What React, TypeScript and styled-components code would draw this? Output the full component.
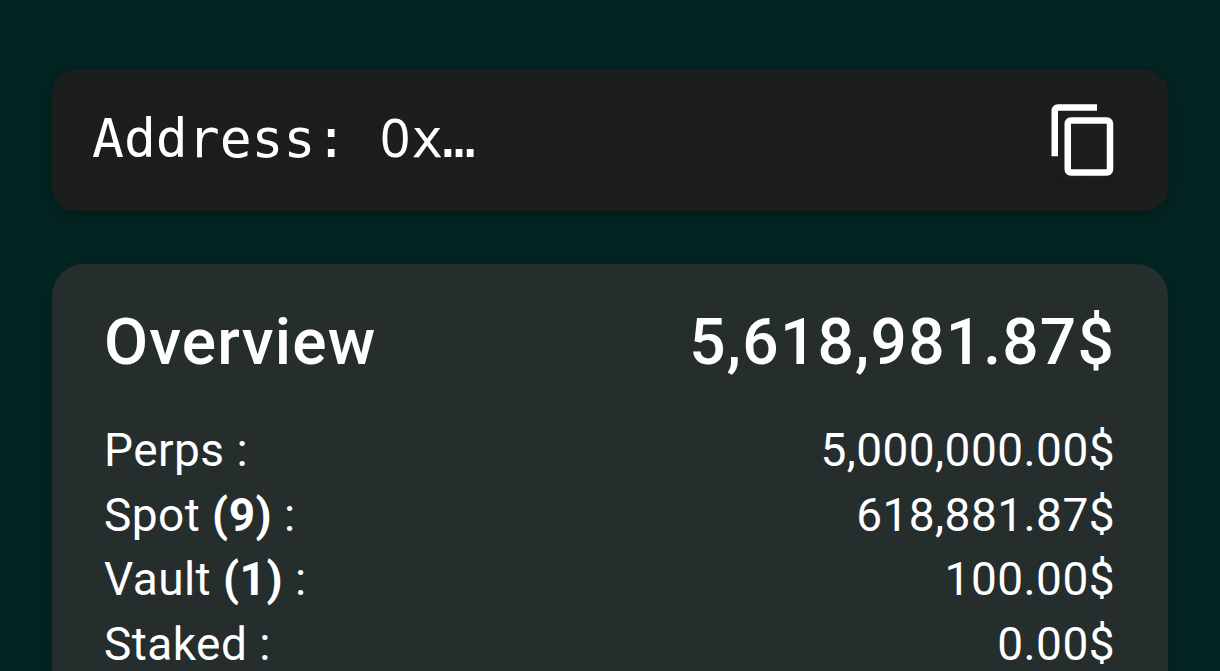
import React from 'react'
import styled, { createGlobalStyle } from 'styled-components'

const GlobalStyle = createGlobalStyle`
  html, body {
    margin: 0;
    padding: 0;
    height: 100%;
    overflow: hidden;
    background: #032522;
  }
`

const Page = styled.div`
  box-sizing: border-box;
  width: 1220px;
  height: 671px;
  padding: 70px 52px 0;
  overflow: hidden;
  background: #032522;
  color: #ffffff;
  font-family: Roboto, 'Liberation Sans', sans-serif;
`

const AddressCard = styled.div`
  box-sizing: border-box;
  display: flex;
  align-items: center;
  justify-content: space-between;
  height: 141px;
  padding: 0 41px 1px 40px;
  margin-bottom: 53px;
  border-radius: 24px;
  background: #1c1e1d;
  box-shadow: 0 4px 22px rgba(0, 0, 0, 0.28);
`

const AddressText = styled.span`
  font-family: 'DejaVu Sans Mono', 'Liberation Mono', monospace;
  font-size: 53px;
  line-height: 1;
  white-space: pre;
`

// the reference font has a plain zero, the mono fonts here all mark it
const Zero = styled.span`
  display: inline-block;
  width: 32px;
  text-align: center;
  font-family: 'Noto Sans', sans-serif;
`

const Ellipsis = styled.span`
  font-family: 'Liberation Mono', monospace;
  font-weight: 700;
`

const CopyButton = styled.button`
  display: flex;
  align-items: center;
  justify-content: center;
  width: 86px;
  height: 86px;
  padding: 0;
  border: 0;
  border-radius: 50%;
  color: #ffffff;
  background: #1c1e1d;
  box-shadow: 0 3px 6px rgba(0, 0, 0, 0.14);
`

const OverviewCard = styled.section`
  padding: 37px 53px 0 52px;
  height: 460px;
  border-radius: 32px;
  background: #262d2d;
  box-shadow: 0 4px 22px rgba(0, 0, 0, 0.2);
`

const Header = styled.div`
  display: flex;
  justify-content: space-between;
  align-items: center;
  height: 82px;
  margin-bottom: 35px;
  font-size: 64px;
  font-weight: 500;
  letter-spacing: 1.2px;
`

const Row = styled.div`
  display: flex;
  justify-content: space-between;
  height: 64.5px;
  line-height: 64.5px;
  font-size: 46px;
  letter-spacing: 0.45px;
`

const Count = styled.b`
  font-weight: 700;
`

const rows = [
  { label: 'Perps', value: '5,000,000.00$' },
  { label: 'Spot', count: 9, value: '618,881.87$' },
  { label: 'Vault', count: 1, value: '100.00$' },
  { label: 'Staked', value: '0.00$' },
]

const CopyIcon = () => (
  <svg width="78" height="78" viewBox="0 0 24 24" fill="currentColor">
    <path d="M16 1H4c-1.1 0-2 .9-2 2v14h2V3h12V1zm3 4H8c-1.1 0-2 .9-2 2v14c0 1.1.9 2 2 2h11c1.1 0 2-.9 2-2V7c0-1.1-.9-2-2-2zm0 16H8V7h11v14z" />
  </svg>
)

export default function App() {
  return (
    <Page>
      <GlobalStyle />
      <AddressCard>
        <AddressText>
          Address: <Zero>0</Zero>x<Ellipsis>…</Ellipsis>
        </AddressText>
        <CopyButton aria-label="Copy address">
          <CopyIcon />
        </CopyButton>
      </AddressCard>
      <OverviewCard>
        <Header>
          <span>Overview</span>
          <span>5,618,981.87$</span>
        </Header>
        {rows.map((row) => (
          <Row key={row.label}>
            <span>
              {row.label}
              {row.count !== undefined && (
                <>
                  {' '}
                  <Count>({row.count})</Count>
                </>
              )}{' '}
              :
            </span>
            <span>{row.value}</span>
          </Row>
        ))}
      </OverviewCard>
    </Page>
  )
}
